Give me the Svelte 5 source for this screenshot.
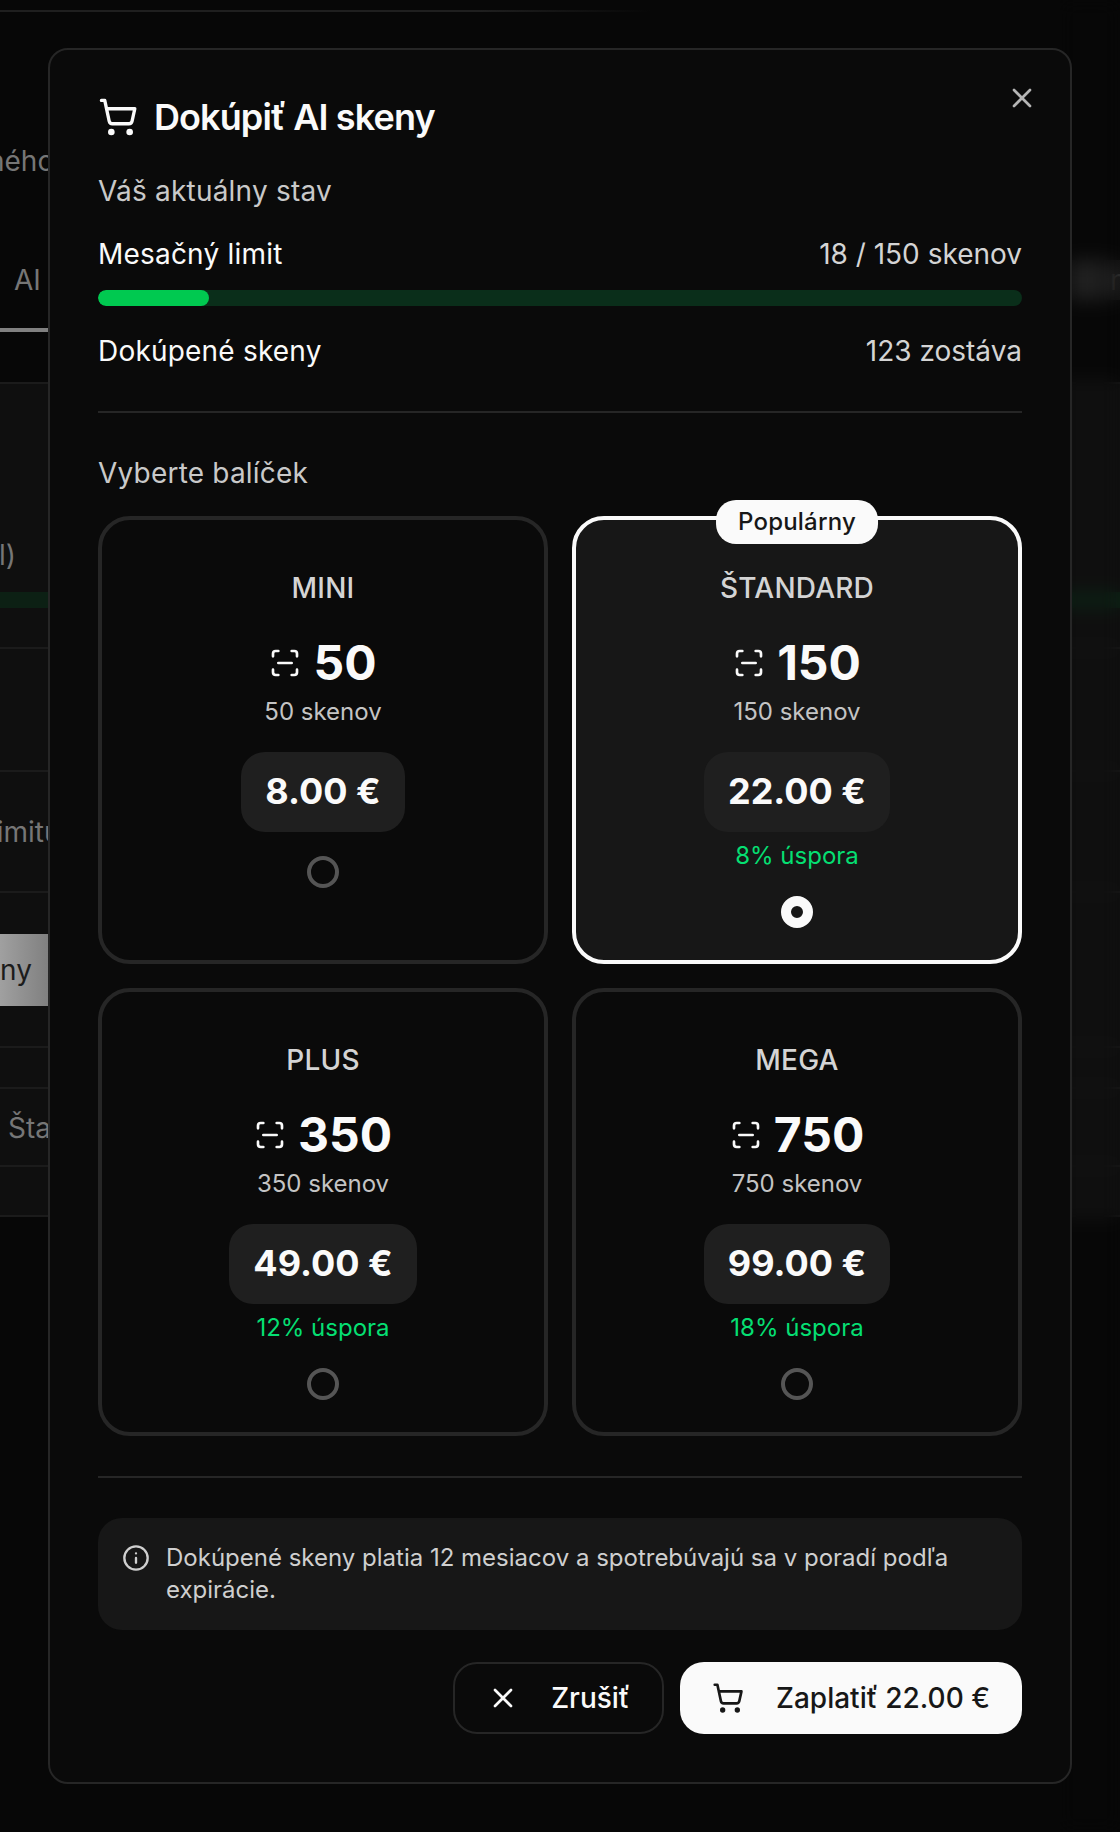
<script>
  const packs = [
    { name: 'MINI', n: 50, price: '8.00 €' },
    { name: 'ŠTANDARD', n: 150, price: '22.00 €', save: '8% úspora', selected: true, badge: 'Populárny' },
    { name: 'PLUS', n: 350, price: '49.00 €', save: '12% úspora' },
    { name: 'MEGA', n: 750, price: '99.00 €', save: '18% úspora' }
  ];
</script>

<div class="page">
  <div class="topline"></div>
  <div class="crumb">ného popisu</div>
  <div class="tabs"><span class="tab">AI</span><span class="tab-right">n</span></div>
  <div class="tabline"></div>
  <div class="panel">
    <div class="row r1"><span class="txt paren">l)</span><div class="gbar"></div></div>
    <div class="row r2"></div>
    <div class="row r3"><span class="txt limit">limitu</span></div>
    <div class="row r4"><div class="graybtn"><span>ny</span></div></div>
    <div class="row r5"></div>
    <div class="row r6"><span class="txt sta">Štandard</span></div>
    <div class="row r7"></div>
  </div>
  <div class="blurstrip"></div>
</div>

<div class="overlay">
  <section class="modal">
    <button class="close" aria-label="Zavrieť">
      <svg viewBox="0 0 24 24" class="i32"><path d="M18 6 6 18M6 6l12 12" /></svg>
    </button>

    <h2 class="title">
      <svg viewBox="0 0 24 24" class="i40">
        <circle cx="8" cy="21" r="1" /><circle cx="19" cy="21" r="1" />
        <path d="M2.05 2.05h2l2.66 12.42a2 2 0 0 0 2 1.58h9.78a2 2 0 0 0 1.95-1.57l1.65-7.43H5.12" />
      </svg>
      Dokúpiť AI skeny
    </h2>

    <div class="sub state">Váš aktuálny stav</div>
    <div class="kv first"><span class="lab">Mesačný limit</span><span class="val">18 / 150 skenov</span></div>
    <div class="bar"><div class="fill" style="width: 12%"></div></div>
    <div class="kv second"><span class="lab">Dokúpené skeny</span><span class="val">123 zostáva</span></div>

    <hr class="rule one" />

    <div class="sub pick">Vyberte balíček</div>
    <div class="grid">
      {#each packs as p}
        <div class="card" class:selected={p.selected}>
          {#if p.badge}<span class="badge">{p.badge}</span>{/if}
          <div class="name">{p.name}</div>
          <div class="num">
            <svg viewBox="0 0 24 24" class="i32">
              <path d="M3 7V5a2 2 0 0 1 2-2h2M17 3h2a2 2 0 0 1 2 2v2M21 17v2a2 2 0 0 1-2 2h-2M7 21H5a2 2 0 0 1-2-2v-2M7 12h10" />
            </svg>
            <span>{p.n}</span>
          </div>
          <div class="count">{p.n} skenov</div>
          <div class="price">{p.price}</div>
          {#if p.save}<div class="save">{p.save}</div>{/if}
          <div class="radio"></div>
        </div>
      {/each}
    </div>

    <hr class="rule two" />

    <div class="info">
      <svg viewBox="0 0 24 24" class="i28">
        <circle cx="12" cy="12" r="10" /><path d="M12 16v-4M12 8h.01" />
      </svg>
      <p>Dokúpené skeny platia 12 mesiacov a spotrebúvajú sa v poradí podľa expirácie.</p>
    </div>

    <div class="actions">
      <button class="btn ghost">
        <svg viewBox="0 0 24 24" class="i32"><path d="M18 6 6 18M6 6l12 12" /></svg>
        Zrušiť
      </button>
      <button class="btn solid">
        <svg viewBox="0 0 24 24" class="i32">
          <circle cx="8" cy="21" r="1" /><circle cx="19" cy="21" r="1" />
          <path d="M2.05 2.05h2l2.66 12.42a2 2 0 0 0 2 1.58h9.78a2 2 0 0 0 1.95-1.57l1.65-7.43H5.12" />
        </svg>
        Zaplatiť 22.00 €
      </button>
    </div>
  </section>
</div>

<style>
  :global(body) {
    margin: 0;
    background: #070707;
  }
  * { box-sizing: border-box; }

  .page {
    position: relative;
    width: 1120px;
    height: 1832px;
    overflow: hidden;
    background: #070707;
    font-family: Inter, sans-serif;
    font-size: 28px;
    color: #767676;
  }
  .topline {
    height: 2px;
    margin-top: 10px;
    background: linear-gradient(90deg, #1f1f1f 0, #1f1f1f 480px, transparent 650px);
  }
  .crumb {
    margin-top: 129px;
    margin-left: -12px;
    line-height: 40px;
    white-space: nowrap;
  }
  .tabs {
    display: flex;
    justify-content: space-between;
    margin-top: 79px;
    line-height: 40px;
    padding-left: 14px;
  }
  .tab-right {
    width: 48px;
    padding-left: 38px;
    overflow: hidden;
    background: linear-gradient(90deg, #262626, #1c1c1c 60%, #141414);
    color: #3c3c3c;
  }
  .tabline {
    height: 4px;
    margin-top: 28px;
    width: 120px;
    background: #808080;
  }
  .panel {
    margin-top: 50px;
    height: 835px;
    background: #0f0f0f;
    border-top: 2px solid #1b1b1b;
    border-bottom: 2px solid #1b1b1b;
  }
  .row {
    position: relative;
    border-bottom: 2px solid #1b1b1b;
    white-space: nowrap;
  }
  .r1 { height: 265px; padding-top: 151px; }
  .r2 { height: 123px; }
  .r3 { height: 121px; padding-top: 40px; }
  .r4 { height: 155px; padding-top: 41px; }
  .r5 { height: 41px; }
  .r6 { height: 78px; padding-top: 19px; padding-left: 8px; }
  .r7 { height: 50px; border-bottom: 0; }
  .txt { display: block; line-height: 40px; }
  .paren { margin-left: -1px; height: 40px; }
  .limit { margin-left: -10px; }
  .gbar {
    height: 16px;
    margin-top: 17px;
    background: #0c2014;
  }
  .graybtn {
    width: 120px;
    height: 72px;
    padding-top: 16px;
    padding-left: 0;
    border-radius: 0 8px 8px 0;
    background: linear-gradient(90deg, #a0a0a0, #808080 48px);
    color: #1c1c1c;
    line-height: 40px;
  }
  .blurstrip {
    position: absolute;
    top: 0;
    bottom: 0;
    left: 1060px;
    right: 0;
    backdrop-filter: blur(9px);
  }

  .overlay {
    position: absolute;
    inset: 0;
    display: flex;
    align-items: center;
    justify-content: center;
    font-family: Inter, sans-serif;
  }
  .modal {
    position: relative;
    width: 1024px;
    padding: 48px;
    background: #0a0a0a;
    border: 2px solid #262626;
    border-radius: 20px;
    color: #fafafa;
    font-size: 28px;
    line-height: 40px;
  }
  svg {
    fill: none;
    stroke: currentColor;
    stroke-width: 2;
    stroke-linecap: round;
    stroke-linejoin: round;
    flex: none;
    display: block;
  }
  .i28 { width: 28px; height: 28px; }
  .i32 { width: 32px; height: 32px; }
  .i40 { width: 40px; height: 40px; }

  .close {
    position: absolute;
    top: 32px;
    right: 32px;
    padding: 0;
    background: none;
    border: 0;
    color: #b5b5b5;
  }
  .title {
    display: flex;
    align-items: center;
    gap: 16px;
    margin: -1px 0 0;
    font-size: 36px;
    line-height: 36px;
    font-weight: 600;
    letter-spacing: -0.9px;
  }
  .sub { color: #c9c9c9; letter-spacing: 0.2px; }
  .lab { letter-spacing: 0.2px; }
  .state { margin-top: 34px; }
  .kv { display: flex; justify-content: space-between; }
  .val { color: #d4d4d4; }
  .first { margin-top: 23px; }
  .second { margin-top: 25px; }
  .bar {
    height: 16px;
    margin-top: 16px;
    border-radius: 8px;
    overflow: hidden;
    background: #0a2e1a;
  }
  .fill { height: 100%; background: #00c950; border-radius: 8px; }
  .rule {
    height: 2px;
    margin: 0;
    border: 0;
    background: #262626;
  }
  .one { margin-top: 40px; }
  .pick { margin-top: 40px; }
  .grid {
    display: grid;
    grid-template-columns: 1fr 1fr;
    grid-auto-rows: 448px;
    gap: 24px;
    margin-top: 23px;
  }
  .card {
    position: relative;
    display: flex;
    flex-direction: column;
    align-items: center;
    padding-top: 48px;
    border: 4px solid #262626;
    border-radius: 32px;
    background: #0a0a0a;
  }
  .card.selected {
    border-color: #fafafa;
    background: #171717;
  }
  .badge {
    position: absolute;
    top: -20px;
    left: 50%;
    transform: translateX(-50%);
    padding: 0 22px;
    height: 44px;
    border-radius: 20px;
    background: #fafafa;
    color: #171717;
    font-size: 24px;
    line-height: 44px;
    font-weight: 500;
    letter-spacing: 0.2px;
    white-space: nowrap;
  }
  .name {
    color: #d4d4d4;
    font-weight: 500;
    line-height: 40px;
    letter-spacing: 0.2px;
  }
  .num {
    display: flex;
    align-items: center;
    gap: 12px;
    margin-top: 25px;
    font-size: 48px;
    line-height: 60px;
    font-weight: 700;
  }
  .count {
    margin-top: 3px;
    color: #c4c4c4;
    font-size: 24px;
    line-height: 32px;
  }
  .price {
    margin-top: 24px;
    padding: 15px 24px 17px;
    border-radius: 24px;
    background: #1f1f1f;
    font-size: 36px;
    line-height: 48px;
    font-weight: 700;
  }
  .save {
    margin-top: 8px;
    color: #05df72;
    font-size: 24px;
    line-height: 32px;
  }
  .radio {
    width: 32px;
    height: 32px;
    margin-top: 24px;
    border: 4px solid #555;
    border-radius: 50%;
  }
  .selected .radio {
    border: 10px solid #fafafa;
    background: #171717;
  }
  .two { margin-top: 40px; }
  .info {
    display: flex;
    gap: 16px;
    margin-top: 40px;
    padding: 24px;
    border-radius: 24px;
    background: #171717;
    color: #cfcfcf;
    font-size: 24px;
    line-height: 32px;
  }
  .info svg { margin-top: 2px; }
  .info p { margin: 0; }
  .actions {
    display: flex;
    justify-content: flex-end;
    gap: 16px;
    margin-top: 32px;
  }
  .btn {
    display: flex;
    align-items: center;
    gap: 32px;
    height: 72px;
    padding: 0 32px;
    border-radius: 24px;
    font: 500 28px/40px Inter, sans-serif;
  }
  .ghost {
    background: #0a0a0a;
    color: #fafafa;
    border: 2px solid #262626;
  }
  .solid {
    background: #fafafa;
    color: #171717;
    border: 0;
  }
</style>
